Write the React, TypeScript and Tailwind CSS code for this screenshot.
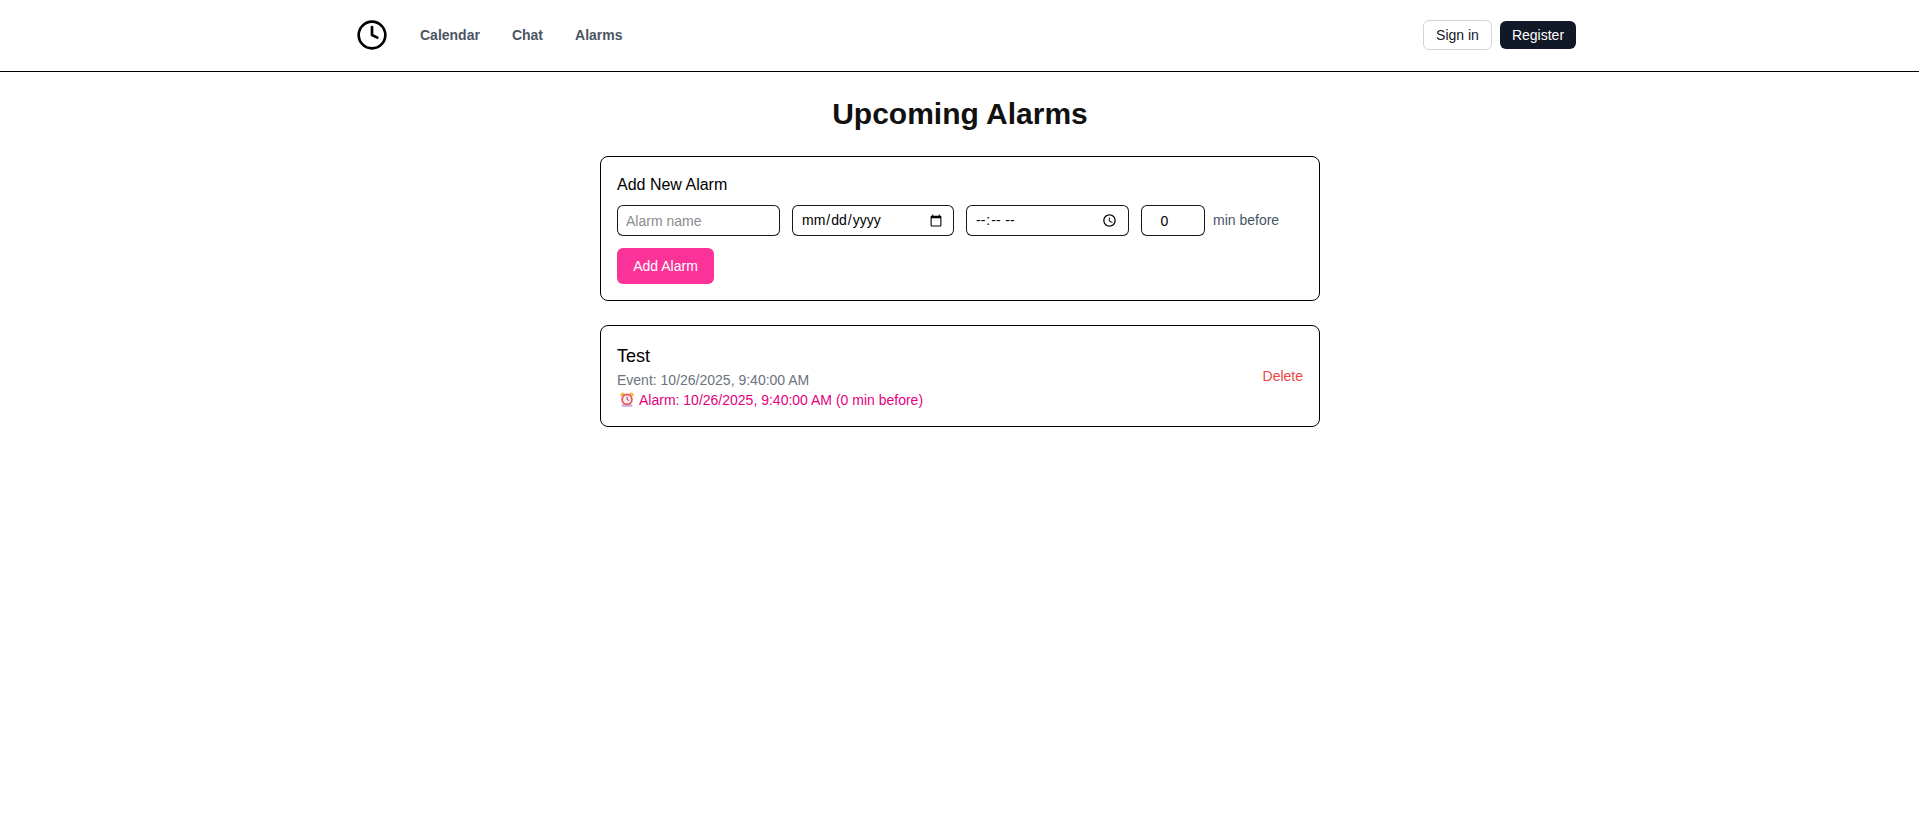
import React from "react";
import { Clock } from "lucide-react";

function AlarmEmoji() {
  return (
    <svg width="14" height="15" viewBox="0 0 14 15" className="shrink-0 ml-[3px] mr-[5px]">
      <path d="M0.4 4.4 Q-0.2 0.8 3.6 0.6 L5 2 Z" fill="#f2b63c" />
      <path d="M13.6 4.4 Q14.2 0.8 10.4 0.6 L9 2 Z" fill="#f2b63c" />
      <rect x="1.5" y="12" width="11" height="3" rx="1.2" fill="#cbb8ea" />
      <circle cx="7" cy="7.4" r="5.8" fill="#ea5a62" />
      <circle cx="7" cy="7.4" r="3.9" fill="#fdeee8" />
      <path d="M7 4.9 V7.4 L8.8 8.5" stroke="#5b4a6b" strokeWidth="1" fill="none" />
    </svg>
  );
}

export default function App() {
  const field =
    "h-[31px] border border-black/90 rounded-md px-2 text-[14px] bg-white text-black outline-none";
  return (
    <div className="min-h-[832px] bg-white text-black font-['Liberation_Sans',Arial,sans-serif]">
      <header className="border-b border-black h-[72px] pl-px">
        <div className="max-w-[1280px] mx-auto h-[70px] pl-[36px] pr-6 flex items-center justify-between">
          <div className="flex items-center">
            <Clock size={32} color="black" strokeWidth={2} />
            <nav className="flex items-center gap-8 ml-8 text-[14px] font-bold text-[#4b5563]">
              <a>Calendar</a>
              <a>Chat</a>
              <a>Alarms</a>
            </nav>
          </div>
          <div className="flex items-center gap-2 text-[14px]">
            <button className="h-[30px] w-[69px] rounded-md border border-[#d1d5db] bg-white text-[#111827]">Sign in</button>
            <button className="h-[28px] w-[76px] rounded-md bg-[#111827] text-white">Register</button>
          </div>
        </div>
      </header>
      <div className="pl-px">
        <main className="max-w-[768px] mx-auto px-6 pt-6">
          <h1 className="text-[30px] leading-9 font-bold text-center text-[#111111] mb-6">Upcoming Alarms</h1>
          <section className="border border-black rounded-lg px-4 pt-4 pb-4 mb-6 h-[145px]">
            <h2 className="text-[16px] leading-6 mb-2">Add New Alarm</h2>
            <div className="flex items-center gap-3 mb-3">
              <input className={`${field} w-[163px] placeholder:text-[#8b8b8b]`} placeholder="Alarm name" />
              <input type="date" className={`${field} w-[162px]`} />
              <input type="time" className={`${field} w-[163px]`} />
              <div className="flex items-center gap-2">
                <input type="number" defaultValue={0} className={`${field} h-[30px] w-[64px] text-center pr-[10px]`} />
                <span className="text-[14px] text-[#475569]">min before</span>
              </div>
            </div>
            <button className="h-9 w-[97px] rounded-md bg-[#fb3399] text-white text-[14px]">Add Alarm</button>
          </section>
          <section className="border border-black rounded-lg px-4 h-[102px] flex items-center justify-between">
            <div className="pt-[2px]">
              <div className="text-[18px] leading-7 -mt-[3px]">Test</div>
              <div className="text-[14px] leading-5 text-[#6b7280]">Event: 10/26/2025, 9:40:00 AM</div>
              <div className="text-[14px] leading-5 text-[#e6007e] flex items-center">
                <AlarmEmoji />
                <span>Alarm: 10/26/2025, 9:40:00 AM (0 min before)</span>
              </div>
            </div>
            <button className="text-[14px] text-[#ef4444]">Delete</button>
          </section>
        </main>
      </div>
    </div>
  );
}
